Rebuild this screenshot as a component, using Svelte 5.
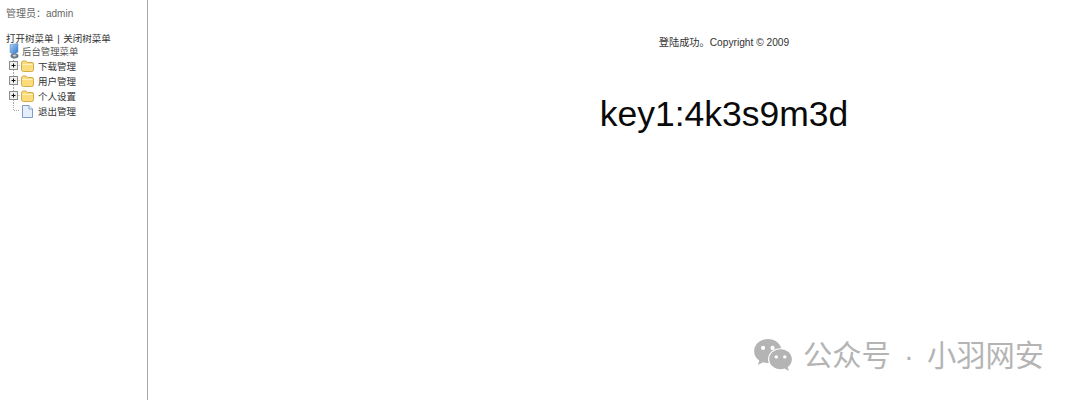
<script>
	const folders = ['下载管理', '用户管理', '个人设置'];
</script>

{#snippet plusBox()}
	<svg width="14" height="15" viewBox="0 0 14 15">
		<path d="M7.500 0V15M7.500 7.500H14" stroke="#a8a8a8" stroke-dasharray="1 1" fill="none" />
		<rect x="3.500" y="3.500" width="8" height="8" fill="#efefef" stroke="#8c8c8c" />
		<path d="M5.500 7.500h4M7.500 5.500v4" stroke="#111" fill="none" />
	</svg>
{/snippet}

<div class="page">
	<aside class="sidebar">
		<p class="admin">管理员：admin</p>
		<p class="toggle">打开树菜单 | 关闭树菜单</p>
		<div class="root">
			<svg width="16" height="16" viewBox="0 0 16 16">
				<defs>
					<linearGradient id="screen" x1="0" y1="0" x2="1" y2="1">
						<stop offset="0" stop-color="#a9d2f5" />
						<stop offset="1" stop-color="#2f74c8" />
					</linearGradient>
				</defs>
				<path d="M4 1.500 12 0.500V9L8 11.500 4 9.500Z" fill="url(#screen)" stroke="#5d8cc0" stroke-width=".5" />
				<ellipse cx="8.500" cy="13" rx="4" ry="2.400" fill="#6b7684" />
				<ellipse cx="8.500" cy="12.600" rx="2" ry="1.100" fill="#c5ccd4" />
			</svg>
			<span>后台管理菜单</span>
		</div>
		<ul class="tree">
			{#each folders as name}
				<li>
					{@render plusBox()}
					<svg width="15" height="15" viewBox="0 0 15 15">
						<path d="M1.500 5Q1.500 3 3.500 3H6L7.500 4.500H12Q13.500 4.500 13.500 6V11.500Q13.500 13.500 11.500 13.500H3.500Q1.500 13.500 1.500 11.500Z" fill="#fbdc7c" stroke="#d2ab4a" />
						<path d="M2.500 6.500H12.500" stroke="#fff2bd" fill="none" />
					</svg>
					<span>{name}</span>
				</li>
			{/each}
			<li>
				<svg width="14" height="15" viewBox="0 0 14 15">
					<path d="M7.500 0V7.500H14" stroke="#a8a8a8" stroke-dasharray="1 1" fill="none" />
				</svg>
				<svg width="15" height="15" viewBox="0 0 15 15">
					<path d="M2.500 2.500H9L12.500 6V14.500H2.500Z" fill="#e6eefb" stroke="#7f9ccf" />
					<path d="M9 2.500V6H12.500" fill="#fff" stroke="#7f9ccf" />
				</svg>
				<span>退出管理</span>
			</li>
		</ul>
	</aside>
	<main class="content">
		<p class="copyright">登陆成功。Copyright © 2009</p>
		<h1 class="key">key1:4k3s9m3d</h1>
	</main>
	<div class="watermark">
		<svg width="40" height="34" viewBox="0 0 42 36">
			<path d="M16 1C7.500 1 1 6.800 1 14C1 18 3 21.400 6.500 23.800L5 28.500L10.500 25.700C12.500 26.300 14.500 26.700 16.500 26.600C15.900 25 15.800 23.600 15.800 22.500C15.800 15.500 22 10.500 29.800 10.800C28 5 22.500 1 16 1Z" fill="#b4b4b4" />
			<path d="M41 22.500C41 16.500 35.500 12 29 12C22.500 12 17 16.500 17 22.500C17 28.500 22.500 33 29 33C30.500 33 32 32.800 33.300 32.300L37.800 35L36.600 30.800C39.400 28.800 41 25.800 41 22.500Z" fill="#b4b4b4" />
			<circle cx="10.500" cy="10.500" r="2.200" fill="#fff" />
			<circle cx="20.500" cy="10.500" r="2.200" fill="#fff" />
			<circle cx="24.500" cy="20" r="1.800" fill="#fff" />
			<circle cx="33.500" cy="20" r="1.800" fill="#fff" />
		</svg>
		<span>公众号 · 小羽网安</span>
	</div>
</div>

<style>
	:global(body) {
		margin: 0;
		background: #fff;
	}

	p, h1, ul {
		margin: 0;
		padding: 0;
	}

	.page {
		display: flex;
		height: 400px;
		overflow: hidden;
		font-family: "Liberation Sans", "Noto Sans CJK SC", sans-serif;
		color: #333;
	}

	.sidebar {
		width: 148px;
		flex: none;
		box-sizing: border-box;
		border-right: 1px solid #a9a9b4;
		padding: 7px 0 0 6px;
	}

	.admin {
		font-size: 10px;
		line-height: 13px;
		color: #666;
	}

	.toggle {
		margin-top: 12px;
		line-height: 13px;
		font-size: 9.500px;
		word-spacing: 1px;
		color: #333;
	}

	.root {
		display: flex;
		align-items: center;
		height: 14px;
		margin-top: -1px;
		font-size: 9.400px;
		color: #555;
	}

	.tree {
		list-style: none;
	}

	.tree li {
		display: flex;
		align-items: center;
		height: 15px;
	}

	.tree span {
		margin-left: 3px;
		font-size: 9.500px;
		color: #333;
	}

	.content {
		flex: 1;
		text-align: center;
		padding: 37px 0 0 220px;
	}

	.copyright {
		font-size: 10.200px;
		line-height: 12px;
		color: #333;
	}

	.key {
		margin-top: 45px;
		font-size: 35.500px;
		line-height: 40px;
		font-weight: 400;
		color: #0a0a0a;
	}

	.watermark {
		position: absolute;
		left: 753px;
		top: 336px;
		display: flex;
		align-items: flex-start;
		gap: 10px;
		font-size: 29.300px;
		line-height: 36px;
		word-spacing: 5px;
		color: #b4b4b4;
		white-space: nowrap;
	}

	.watermark svg {
		margin-top: 2px;
	}

	.watermark span {
		margin-top: 2px;
	}
</style>
